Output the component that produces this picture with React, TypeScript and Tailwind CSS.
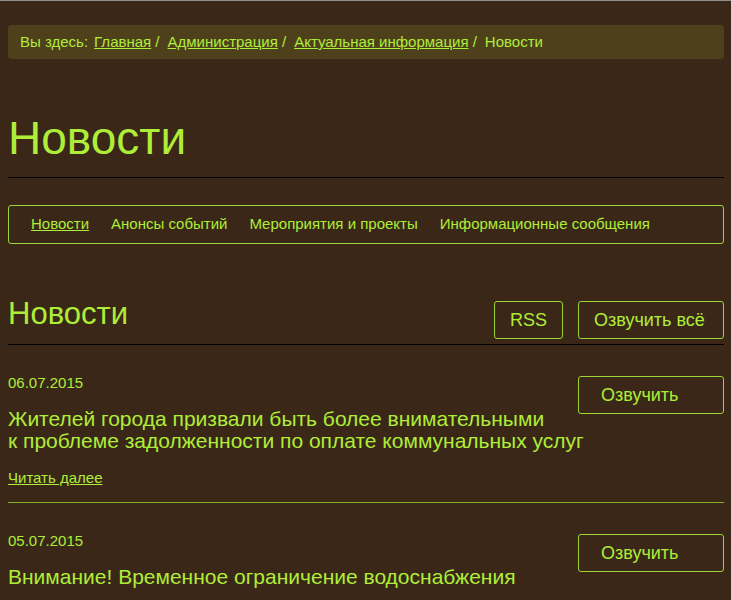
import React from "react";

const trail = ["Главная", "Администрация", "Актуальная информация"];
const sections = ["Анонсы событий", "Мероприятия и проекты", "Информационные сообщения"];
const box = "rounded-[3px] border border-[#9ad534] text-lg leading-9";

const items = [
  {
    date: "06.07.2015",
    title: ["Жителей города призвали быть более внимательными", "к проблеме задолженности по оплате коммунальных услуг"],
    more: true,
  },
  { date: "05.07.2015", title: ["Внимание! Временное ограничение водоснабжения"], more: false },
];

export default function App() {
  return (
    <div className="min-h-screen border-t border-[#938c88] bg-[#3a2717] pt-6 pr-[7px] pl-2 font-['Liberation_Sans',Arial,sans-serif] text-[15px] leading-5 text-[#aeed38]">
      <nav aria-label="Вы здесь" className="flex flex-wrap rounded-[3px] bg-[#4f401c] px-3 py-[7px]">
        <span className="mr-[6px]">Вы здесь:</span>
        {trail.map((t) => (
          <span key={t} className="mr-2">
            <a href="#" className="underline">{t}</a> /
          </span>
        ))}
        <span>Новости</span>
      </nav>
      <h1 className="mt-[50px] border-b border-black pb-[10px] text-[46px] leading-[58px]">Новости</h1>
      <nav aria-label="Разделы" className="mt-[27px] flex flex-wrap gap-x-[22px] rounded-[3px] border border-[#9ad534] px-[22px] pt-2 pb-[9px]">
        <a href="#" className="underline">Новости</a>
        {sections.map((s) => <a key={s} href="#">{s}</a>)}
      </nav>
      <div className="mt-[57px] flex items-start border-b border-black pb-[5px]">
        <h2 className="flex-1 text-[31px] leading-[26px]">Новости</h2>
        <a href="#" className={`${box} mr-[15px] px-[15px]`}>RSS</a>
        <button type="button" className={`${box} w-[146px] pl-[15px] text-left`}>Озвучить всё</button>
      </div>
      {items.map((n) => (
        <article key={n.date} className="border-b border-[#88ad28] pt-7 pb-[14px] last:border-0 last:pb-0">
          <button type="button" className={`${box} float-right mt-[3px] w-[146px] pl-[22px] text-left`}>Озвучить</button>
          <time className="block">{n.date}</time>
          <h3 className="mt-[15px] text-[21px] leading-[22px]">
            {n.title.map((l) => <span key={l} className="block">{l}</span>)}
          </h3>
          {n.more && <a href="#" className="mt-4 block w-fit underline">Читать далее</a>}
        </article>
      ))}
    </div>
  );
}
